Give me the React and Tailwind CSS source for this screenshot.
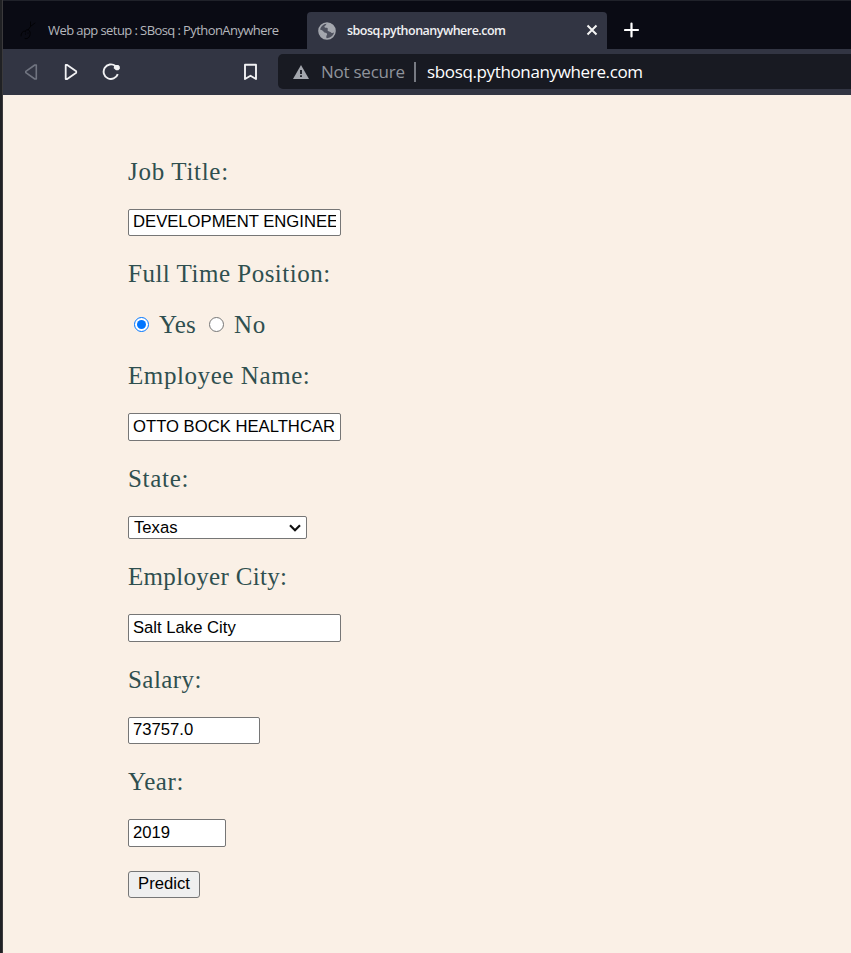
const labelFont = "font-['Georgia','Liberation_Serif',serif] text-[25px] leading-[28px] text-[#2f4f4f] whitespace-nowrap";
const field = "block box-border rounded-[2px] border border-[#767676] bg-white px-1 font-['Liberation_Sans',Arial,sans-serif] text-[16.67px] leading-[23px] text-black outline-none";

function Label({ children, className }) {
  return <div className={`${labelFont} ${className}`}>{children}</div>;
}

function TabStrip() {
  return (
    <div className="flex h-[49px] items-end border-t border-[#20222a] bg-[#0a0b14]">
      <div className="flex h-[37px] w-[304px] items-center pl-[17px]">
        <svg className="h-5 w-4 shrink-0" viewBox="0 0 16 20" fill="none" stroke="#020205" strokeWidth="1" strokeLinecap="round">
          <path d="M10.500 1v4.500M15 2l-4.500 3.500-2.500 3.500M5 17.500c3 1.500 6-3 5-6.500S5 8 5.500 11M1 15c0-3 1.500-5 4-5M5.500 13v.2M8 12v.2" />
        </svg>
        <span className="ml-3 whitespace-nowrap font-['Open_Sans',sans-serif] text-[13px] tracking-[-0.580px] text-[#b5b7bd]">
          Web app setup : SBosq : PythonAnywhere
        </span>
      </div>
      <div className="flex h-[37px] w-[300px] items-center rounded-t-[4px] bg-[#323543] pl-[11px] pr-[9px]">
        <svg className="h-[18px] w-[18px] shrink-0" viewBox="0 0 18 18">
          <circle cx="9" cy="9" r="8" fill="#4e515e" stroke="#a4a7ae" strokeWidth="1.600" />
          <path d="M1.500 7.500c2 .2 3.500 1 4.200 2.300.8 1.300 2.700.6 3.300 2 .5 1.200-.8 1.500-.7 3l.2 2C4 16.500 1 12.500 1.500 7.500zM9 1c-1 .8-.4 1.800-1.600 2.400-1 .5-1.400 1.300-.5 2 .8.600 2-.2 2.700.8.700 1.200-.7 2 .5 2.700 1.400.9 2.200.5 3 1.500.6.8 1.900.6 3.400-.2C17.600 5 14 1 9 1z" fill="#a4a7ae" />
        </svg>
        <span className="ml-[11px] flex-1 whitespace-nowrap pt-px font-['Open_Sans',sans-serif] text-[12.5px] font-semibold tracking-[-0.510px] text-[#f0f0f2]">
          sbosq.pythonanywhere.com
        </span>
        <svg className="mb-px h-3 w-3" viewBox="0 0 12 12" stroke="#f4f4f4" strokeWidth="2">
          <path d="M1.500 1.500l9 9M10.500 1.500l-9 9" />
        </svg>
      </div>
      <svg className="mb-[11px] ml-[17px] h-4 w-4" viewBox="0 0 16 16" stroke="#fff" strokeWidth="2.200" strokeLinecap="round">
        <path d="M7.500 1.500v13M1 8h13" />
      </svg>
    </div>
  );
}

function Toolbar() {
  return (
    <div className="flex h-[46px] items-center bg-[#323543] pl-[21px]">
      <svg className="mb-px h-[18px] w-[14px]" viewBox="0 0 14 18" fill="none" stroke="#707480" strokeWidth="1.600" strokeLinejoin="round">
        <path d="M12.300 2v14L10.800 16 1.800 9.700V8.300L10.800 2z" />
      </svg>
      <svg className="mb-px ml-[26px] h-[18px] w-[14px]" viewBox="0 0 14 18" fill="none" stroke="#f1f1f3" strokeWidth="1.800" strokeLinejoin="round">
        <path d="M1.700 2v14h1.500l9-6.300V8.300L3.200 2z" />
      </svg>
      <svg className="mb-px ml-[23px] h-[18px] w-[20px]" viewBox="0 0 20 18" fill="none" stroke="#f1f1f3" strokeWidth="1.900">
        <path d="M16.800 11.200A7.300 7.300 0 1 1 14.500 3" />
        <path d="M13.200 2h4.200l1.400 1.500v2.300l-1.500 1.400h-2.300l-2.300-2z" fill="#f1f1f3" stroke="none" />
      </svg>
      <svg className="mb-px ml-[121px] h-[18px] w-[16px]" viewBox="0 0 16 18" fill="none" stroke="#f1f1f3" strokeWidth="1.900" strokeLinejoin="round">
        <path d="M3 1.700h11V16L8.500 12.800 3 16z" />
      </svg>
      <div className="mb-[6px] ml-[20px] flex h-[35px] flex-1 items-center self-end rounded-l-[5px] bg-[#181a22] pl-[15px] font-['Open_Sans',sans-serif] text-[17px]">
        <svg className="h-[14px] w-4 shrink-0" viewBox="0 0 16 14">
          <path d="M8 0l8 14H0z" fill="#a3a6ad" />
          <path d="M7.100 5h1.800v4H7.100zM7.100 10.300h1.800V12H7.100z" fill="#181a22" />
        </svg>
        <span className="ml-3 w-[93px] whitespace-nowrap tracking-[-0.250px] text-[#8f939b]">Not secure</span>
        <div className="h-5 w-[2px] bg-[#777a82]" />
        <span className="ml-[11px] whitespace-nowrap tracking-[-0.360px] text-white">sbosq.pythonanywhere.com</span>
      </div>
    </div>
  );
}

function PredictionForm() {
  return (
    <form className="flex flex-1 flex-col items-start bg-[#faf0e6] pl-[125px] pt-[63px]">
      <Label className="tracking-[0.7px]">Job Title:</Label>
      <input readOnly className={`${field} mt-[23px] h-[27px] w-[213px] pb-[2px]`} value="DEVELOPMENT ENGINEER" />
      <Label className="mt-[24px] tracking-[0.5px]">Full Time Position:</Label>
      <div className="mt-[23px] flex h-[28px] items-center">
        <span className="mb-[2px] ml-[6px] flex h-[15px] w-[15px] items-center justify-center rounded-full border-[1.500px] border-[#0075ff] bg-white">
          <span className="h-[9px] w-[9px] rounded-full bg-[#0075ff]" />
        </span>
        <Label className="ml-[10px] w-[50px] tracking-[0.2px]">Yes</Label>
        <span className="mb-[2px] h-[15px] w-[15px] rounded-full border border-[#767676] bg-white" />
        <Label className="ml-[10px] tracking-[0.6px]">No</Label>
      </div>
      <Label className="mt-[23px] tracking-[0.580px]">Employee Name:</Label>
      <input readOnly className={`${field} mt-[23px] h-[28px] w-[213px]`} value="OTTO BOCK HEALTHCARE" />
      <Label className="mt-[24px] tracking-[0.7px]">State:</Label>
      <div className={`${field} mt-[23px] flex h-[23px] w-[179px] items-center justify-between pl-[5px] pr-[5px]`}>
        <span>Texas</span>
        <svg className="h-[8px] w-3" viewBox="0 0 12 8" fill="none" stroke="#101010" strokeWidth="2.200">
          <path d="M1 1.200l5 5 5-5" />
        </svg>
      </div>
      <Label className="mt-[24px] tracking-[0.320px]">Employer City:</Label>
      <input readOnly className={`${field} mt-[23px] h-[28px] w-[213px]`} value="Salt Lake City" />
      <Label className="mt-[24px] tracking-[0.450px]">Salary:</Label>
      <input readOnly className={`${field} mt-[23px] h-[27px] w-[132px] pb-[2px]`} value="73757.0" />
      <Label className="mt-[24px] tracking-[0.6px]">Year:</Label>
      <input readOnly className={`${field} mt-[23px] h-[28px] w-[98px]`} value="2019" />
      <button type="button" className="mt-6 h-[27px] w-[72px] rounded-[3px] border border-[#767676] bg-[#efefef] pb-[2px] font-['Liberation_Sans',Arial,sans-serif] text-[16.67px] leading-[23px] text-black">
        Predict
      </button>
    </form>
  );
}

export default function App() {
  return (
    <div className="flex h-[953px] w-[851px] overflow-hidden bg-[#202124]">
      <div className="w-[3px] shrink-0 border-r border-[#3b3a3c] bg-[#202124]" />
      <div className="flex flex-1 flex-col">
        <TabStrip />
        <Toolbar />
        <PredictionForm />
      </div>
    </div>
  );
}
